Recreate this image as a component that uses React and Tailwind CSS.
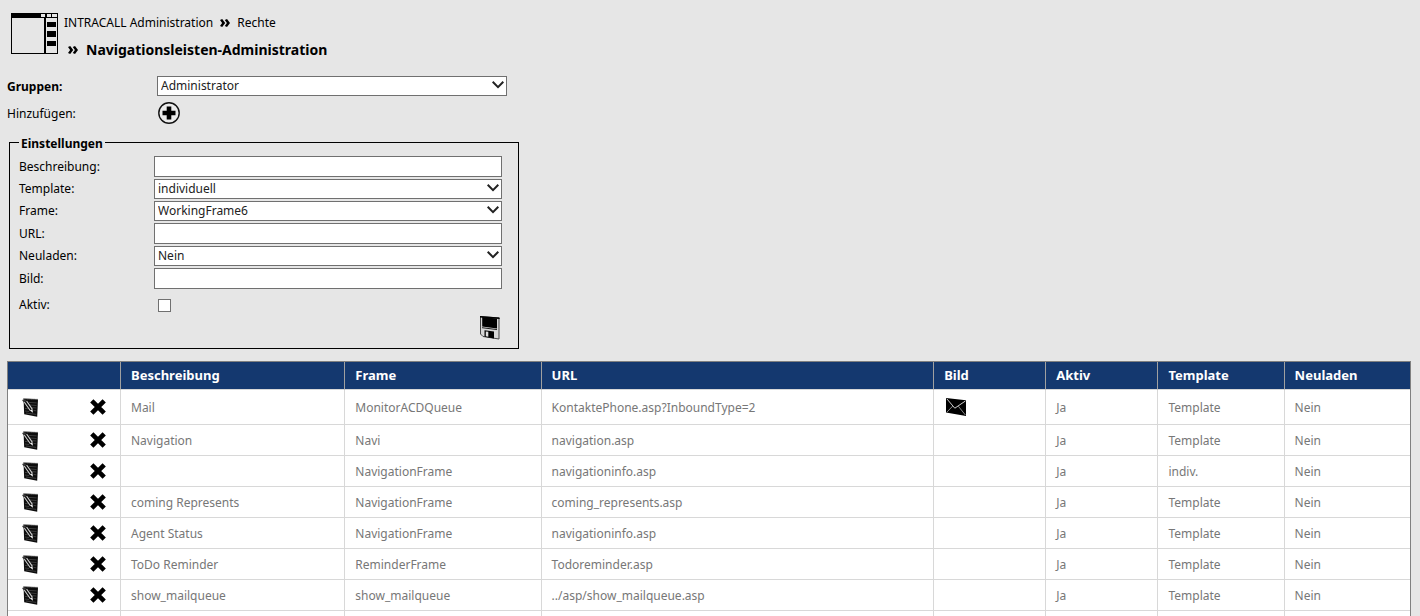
import React from "react";

const rows = [
  { text: "Mail", frame: "MonitorACDQueue", url: "KontaktePhone.asp?InboundType=2", mail: true, template: "Template" },
  { text: "Navigation", frame: "Navi", url: "navigation.asp", template: "Template" },
  { text: "", frame: "NavigationFrame", url: "navigationinfo.asp", template: "indiv." },
  { text: "coming Represents", frame: "NavigationFrame", url: "coming_represents.asp", template: "Template" },
  { text: "Agent Status", frame: "NavigationFrame", url: "navigationinfo.asp", template: "Template" },
  { text: "ToDo Reminder", frame: "ReminderFrame", url: "Todoreminder.asp", template: "Template" },
  { text: "show_mailqueue", frame: "show_mailqueue", url: "../asp/show_mailqueue.asp", template: "Template" },
];

const th = "h-[28px] border-b border-r border-b-[#d8d8d8] border-r-[#a0a0a0] px-[10px] pb-[2px] text-left text-[13px] leading-4 font-bold text-white last:border-r-0";
const cell = "border-b border-r border-[#d8d8d8] px-[10px] text-[12px] leading-4 text-[#777777] last:border-r-0";
const td = `${cell} pt-[2px]`;

function WindowIcon() {
  return (
    <svg width="47" height="42" viewBox="0 0 47 42" className="shrink-0" aria-hidden="true">
      <rect x="0.5" y="0.5" width="46" height="40" fill="#e6e6e6" stroke="#000" />
      <rect x="0" y="0" width="47" height="5" fill="#000" />
      <rect x="30" y="1" width="4" height="3" fill="#e6e6e6" />
      <rect x="36" y="1" width="4" height="3" fill="#e6e6e6" />
      <rect x="41" y="1" width="5" height="3" fill="#e6e6e6" />
      <rect x="33" y="4" width="2" height="37" fill="#000" />
      <rect x="36" y="9" width="9" height="5" fill="#000" />
      <rect x="36" y="18" width="9" height="6" fill="#000" />
      <rect x="36" y="28" width="9" height="5" fill="#000" />
    </svg>
  );
}

function DoubleChevron() {
  return (
    <svg width="10" height="9" viewBox="0 0 10 9" className="shrink-0" aria-hidden="true">
      <path d="M0 1 2.2 0 5.2 4 2.2 8 0 7 2.1 4zM4.8 1 7 0 10 4 7 8 4.8 7 6.9 4z" fill="#000" />
    </svg>
  );
}

function PlusIcon() {
  return (
    <svg width="22" height="22" viewBox="0 0 22 22" aria-hidden="true">
      <circle cx="11" cy="11" r="10.2" fill="#ececec" stroke="#111" strokeWidth="1.4" />
      <path d="M8.7 4.5h4.6v4.2h4.2v4.6h-4.2v4.2H8.7v-4.2H4.5V8.7h4.2z" fill="#000" />
    </svg>
  );
}

function DiskIcon() {
  return (
    <svg width="20" height="24" viewBox="0 0 20 24" aria-hidden="true">
      <path d="M.5.5 19 2v21L3 20.5.5 18z" fill="#d6d6d6" stroke="#444" strokeWidth="1" />
      <path d="M0 0 19.6 1.6V3L0 1.4z" fill="#000" />
      <path d="M2.2 1 17 2.4v10.2L2.2 10.6z" fill="#000" />
      <path d="M2 11.7 17 13.6" stroke="#222" strokeWidth="1" />
      <path d="M4.5 14.3 14 15.6v7L4.5 20.7z" fill="#000" />
      <path d="M5.8 15.4 8.3 15.7v5.1L5.8 20.3z" fill="#e0e0e0" />
    </svg>
  );
}

function NotebookIcon() {
  return (
    <svg width="16" height="19" viewBox="0 0 16 19" aria-hidden="true">
      <path d="M1.5.4 16 1.2 15.2 18.8 2.2 16.2z" fill="#0c0c0c" />
      <path d="M1.5.6 16 1.4" stroke="#8a8a8a" strokeWidth="1.2" strokeDasharray="1 1" />
      <path d="M7 4.4 14.6 4.9M8 7 14.5 7.5M10 9.6 14.4 10M3 10.4 6 10.8M3 13 7 13.5M11.5 12.4 14.3 12.8M4 15 14.2 16.4" stroke="#484848" strokeWidth=".8" />
      <path d="M2.2 4 8.4 12.8M4.6 3 10.4 11.4" fill="none" stroke="#d0d0d0" strokeWidth="1.1" />
      <path d="M8 12.4 10.4 11.2 11 14.8z" fill="#f4f4f4" />
      <path d="M0 2 2.6 1.2 4.4 2.8 1.8 4.4z" fill="#3a3a3a" />
    </svg>
  );
}

function CrossIcon() {
  return (
    <svg width="16" height="16" viewBox="0 0 16 16" stroke="#000" strokeWidth="4.6" aria-hidden="true">
      <path d="M1.8 1.8 14.2 14.2M14.2 1.8 1.8 14.2" strokeLinecap="butt" />
    </svg>
  );
}

function MailIcon() {
  return (
    <svg width="20" height="18" viewBox="0 0 20 18" role="img" aria-label="Mail">
      <path d="M0 0 20 2.2V18L0 14.6z" fill="#000" />
      <path d="M.8.8 8.8 10.2 19.4 3" fill="none" stroke="#ccc" strokeWidth="1" />
      <path d="M.8 14.2 6.8 8M12.3 8.2 19.4 17" fill="none" stroke="#999" strokeWidth=".9" />
    </svg>
  );
}

function Select({ id, value }) {
  return (
    <div className="relative">
      <select
        id={id}
        defaultValue={value}
        className="block h-5 w-full appearance-none border border-[#707070] bg-white pr-5 pl-[3px] text-[12px] leading-4 text-[#222222]"
      >
        <option>{value}</option>
      </select>
      <svg width="12" height="8" viewBox="0 0 12 8" fill="none" stroke="#222" strokeWidth="2" className="pointer-events-none absolute top-[5px] right-[3px]" aria-hidden="true">
        <path d="M.7.8 6 6.1 11.3.8" />
      </svg>
    </div>
  );
}

function Field({ id, label, value }) {
  return (
    <div className="grid grid-cols-[135px_1fr] items-center">
      <label htmlFor={id}>{label}</label>
      {value ? (
        <Select id={id} value={value} />
      ) : (
        <input id={id} type="text" className="block h-[21px] w-full border border-[#707070] bg-white px-1" />
      )}
    </div>
  );
}

export default function App() {
  return (
    <div className="h-screen overflow-hidden bg-[#e6e6e6] pr-[9px] pl-[7px] font-['Noto_Sans','Open_Sans',sans-serif] text-[12px] leading-4 text-black">
      <header className="flex gap-[6px] pt-[13px] pl-1">
        <WindowIcon />
        <div>
          <nav className="flex h-5 items-center gap-[7px]">
            <a href="#administration">INTRACALL Administration</a>
            <DoubleChevron />
            <a href="#rechte">Rechte</a>
          </nav>
          <h1 className="mt-[7px] flex items-center gap-2 pl-1 text-[14px] leading-5 font-bold">
            <DoubleChevron />
            Navigationsleisten-Administration
          </h1>
        </div>
      </header>

      <form onSubmit={(e) => e.preventDefault()}>
        <div className="mt-4 grid max-w-[500px] grid-cols-[150px_1fr] items-center gap-y-[6px]">
          <label htmlFor="gruppen" className="pt-[2px] font-bold">Gruppen:</label>
          <Select id="gruppen" value="Administrator" />
          <label htmlFor="add" className="pt-[2px]">Hinzufügen:</label>
          <button id="add" type="button" className="ml-px w-fit" aria-label="Hinzufügen">
            <PlusIcon />
          </button>
        </div>

        <fieldset className="mt-3 ml-[2px] max-w-[510px] border border-black pr-4 pb-2 pl-[9px]">
          <legend className="h-3 px-[2px] text-[12px] leading-4 font-bold">Einstellungen</legend>
          <div className="mt-2 flex flex-col gap-[2px]">
            <Field id="beschreibung" label="Beschreibung:" />
            <Field id="template" label="Template:" value="individuell" />
            <Field id="frame" label="Frame:" value="WorkingFrame6" />
            <Field id="url" label="URL:" />
            <Field id="neuladen" label="Neuladen:" value="Nein" />
            <Field id="bild" label="Bild:" />
          </div>
          <div className="mt-2 grid grid-cols-[135px_1fr] items-center">
            <label htmlFor="aktiv">Aktiv:</label>
            <input id="aktiv" type="checkbox" className="ml-1 block size-[13px] appearance-none border border-[#707070] bg-white checked:bg-black" />
          </div>
          <div className="mt-[3px] flex justify-end pr-[2px]">
            <button type="submit" aria-label="Speichern">
              <DiskIcon />
            </button>
          </div>
        </fieldset>
      </form>

      <table className="mt-3 w-full table-fixed border-separate border-spacing-0 border border-b-0 border-[#808080] bg-white">
        <thead className="bg-[#14386f]">
          <tr>
            <th className={`${th} w-[113px]`} aria-label="Aktionen"></th>
            <th className={`${th} w-[16%]`}>Beschreibung</th>
            <th className={`${th} w-[14%]`}>Frame</th>
            <th className={`${th} w-[28%]`}>URL</th>
            <th className={`${th} w-[8%]`}>Bild</th>
            <th className={`${th} w-[8%]`}>Aktiv</th>
            <th className={`${th} w-[9%]`}>Template</th>
            <th className={th}>Neuladen</th>
          </tr>
        </thead>
        <tbody>
          {rows.map((r, i) => (
            <tr key={i} className={r.mail ? "h-[35px]" : "h-[31px]"}>
              <td className={cell}>
                <div className="flex items-center justify-between px-1">
                  <button type="button" aria-label="Bearbeiten"><NotebookIcon /></button>
                  <button type="button" aria-label="Löschen"><CrossIcon /></button>
                </div>
              </td>
              <td className={td}>{r.text}</td>
              <td className={td}>{r.frame}</td>
              <td className={td}>{r.url}</td>
              <td className={cell}>{r.mail && <div className="pl-[2px]"><MailIcon /></div>}</td>
              <td className={td}>Ja</td>
              <td className={td}>{r.template}</td>
              <td className={td}>Nein</td>
            </tr>
          ))}
          <tr className="h-[31px]">
            <td className={td}></td>
            <td className={td}></td>
            <td className={td}></td>
            <td className={td}></td>
            <td className={td}></td>
            <td className={td}></td>
            <td className={td}></td>
            <td className={td}></td>
          </tr>
        </tbody>
      </table>
    </div>
  );
}
